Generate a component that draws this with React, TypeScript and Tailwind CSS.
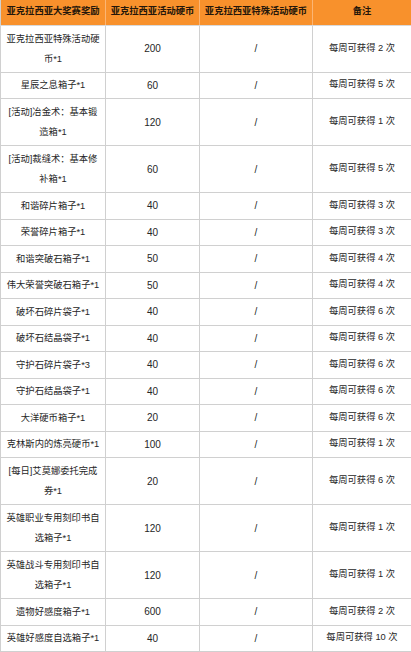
type Row = {
	name: string[];
	coin: string;
	special: string;
	note: string;
	tall?: boolean;
};

const rows: Row[] = [
	{ name: ["亚克拉西亚特殊活动硬", "币*1"], coin: "200", special: "/", note: "每周可获得 2 次", tall: true },
	{ name: ["星辰之息箱子*1"], coin: "60", special: "/", note: "每周可获得 5 次" },
	{ name: ["[活动]冶金术：基本锻", "造箱*1"], coin: "120", special: "/", note: "每周可获得 1 次", tall: true },
	{ name: ["[活动]裁缝术：基本修", "补箱*1"], coin: "60", special: "/", note: "每周可获得 5 次", tall: true },
	{ name: ["和谐碎片箱子*1"], coin: "40", special: "/", note: "每周可获得 3 次" },
	{ name: ["荣誉碎片箱子*1"], coin: "40", special: "/", note: "每周可获得 3 次" },
	{ name: ["和谐突破石箱子*1"], coin: "50", special: "/", note: "每周可获得 4 次" },
	{ name: ["伟大荣誉突破石箱子*1"], coin: "50", special: "/", note: "每周可获得 4 次" },
	{ name: ["破坏石碎片袋子*1"], coin: "40", special: "/", note: "每周可获得 6 次" },
	{ name: ["破坏石结晶袋子*1"], coin: "40", special: "/", note: "每周可获得 6 次" },
	{ name: ["守护石碎片袋子*3"], coin: "40", special: "/", note: "每周可获得 6 次" },
	{ name: ["守护石结晶袋子*1"], coin: "40", special: "/", note: "每周可获得 6 次" },
	{ name: ["大洋硬币箱子*1"], coin: "20", special: "/", note: "每周可获得 6 次" },
	{ name: ["克林斯内的炼亮硬币*1"], coin: "100", special: "/", note: "每周可获得 1 次" },
	{ name: ["[每日]艾莫娜委托完成", "券*1"], coin: "20", special: "/", note: "每周可获得 6 次", tall: true },
	{ name: ["英雄职业专用刻印书自", "选箱子*1"], coin: "120", special: "/", note: "每周可获得 1 次", tall: true },
	{ name: ["英雄战斗专用刻印书自", "选箱子*1"], coin: "120", special: "/", note: "每周可获得 1 次", tall: true },
	{ name: ["遗物好感度箱子*1"], coin: "600", special: "/", note: "每周可获得 2 次" },
	{ name: ["英雄好感度自选箱子*1"], coin: "40", special: "/", note: "每周可获得 10 次" },
];

const headers = ["亚克拉西亚大奖赛奖励", "亚克拉西亚活动硬币", "亚克拉西亚特殊活动硬币", "备注"];

export default function App() {
	return (
		<div
			className="h-[652px] w-[411px] overflow-hidden bg-white text-[#262626]"
			style={{ fontFamily: '"Liberation Sans", "Noto Sans CJK SC", sans-serif' }}
		>
			<table className="w-[411px] table-fixed border-collapse text-center text-[9.3px]">
				<colgroup>
					<col className="w-[105px]" />
					<col className="w-[94px]" />
					<col className="w-[113px]" />
					<col className="w-[99px]" />
				</colgroup>
				<thead>
					<tr className="h-[25px] bg-[#f8912c]">
						{headers.map((header) => (
							<th
								key={header}
								className="whitespace-nowrap border-x border-x-[#fbb574] border-b border-b-[#d9d9d9] px-0 font-bold text-[#24160a] first:border-l-[#d0d0d0]"
							>
								{header}
							</th>
						))}
					</tr>
				</thead>
				<tbody>
					{rows.map((row, index) => (
						<tr key={index} className={row.tall ? "h-[47px]" : "h-[26.5px]"}>
							<td className="border border-[#d0d0d0] px-1 leading-[20px] whitespace-nowrap">
								{row.name.map((line) => (
									<div key={line}>{line}</div>
								))}
							</td>
							<td className="border border-[#d0d0d0] text-[10px]">{row.coin}</td>
							<td className="border border-[#d0d0d0] text-[10px]">{row.special}</td>
							<td className="border border-[#d0d0d0] whitespace-nowrap">{row.note}</td>
						</tr>
					))}
				</tbody>
			</table>
		</div>
	);
}
